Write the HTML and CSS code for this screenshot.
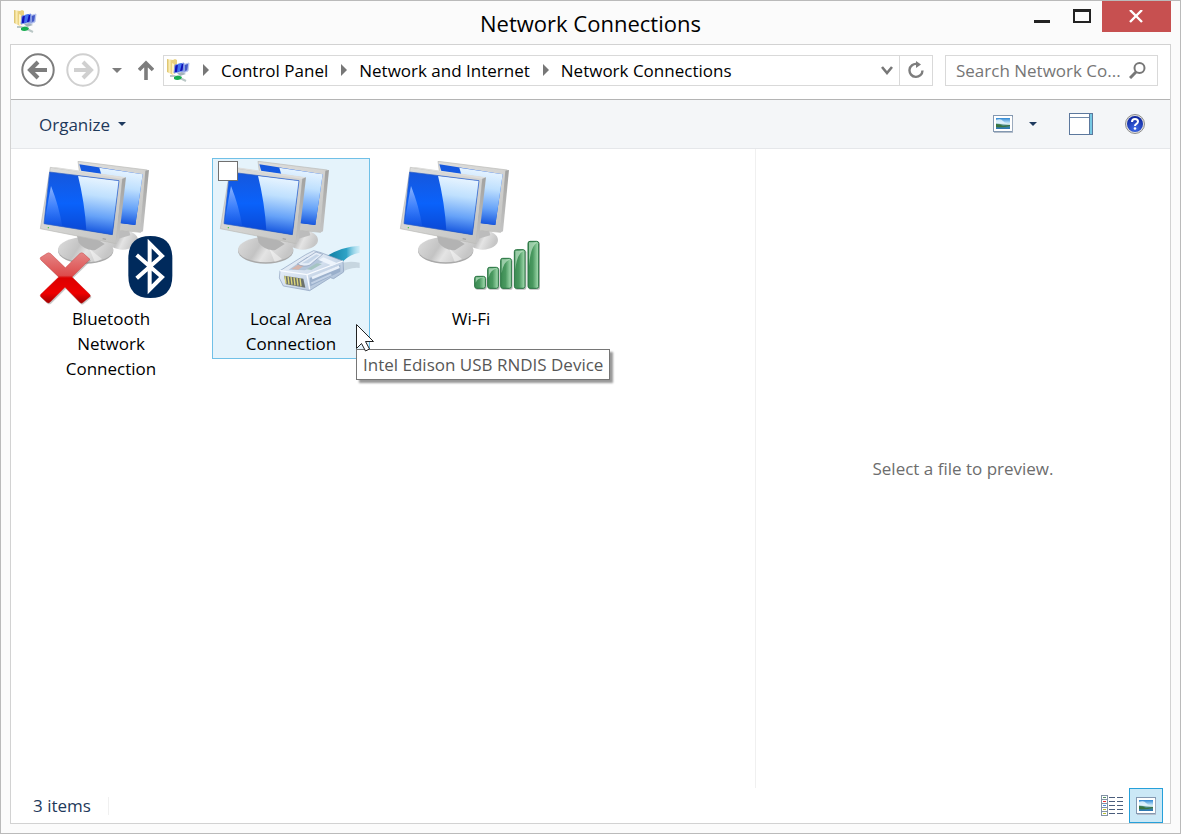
FILE: index.html
```
<!DOCTYPE html>
<html lang="en">
<head>
<meta charset="utf-8">
<title>Network Connections</title>
<link rel="stylesheet" href="styles.css">
</head>
<body>
<svg class="defs" aria-hidden="true">
  <defs>
    <linearGradient id="frame" x1="0" y1="0" x2="1" y2="1"><stop offset="0" stop-color="#dededc"/><stop offset=".5" stop-color="#d4d4d2"/><stop offset="1" stop-color="#c2c2c0"/></linearGradient>
    <linearGradient id="side" x1="0" y1="0" x2="0" y2="1"><stop offset="0" stop-color="#a2a2a0"/><stop offset="1" stop-color="#c4c4c4"/></linearGradient>
    <linearGradient id="screen" x1="0" y1="0" x2="0" y2="1"><stop offset="0" stop-color="#1657dc"/><stop offset=".5" stop-color="#0a62fb"/><stop offset="1" stop-color="#0a45d0"/></linearGradient>
    <linearGradient id="glare" x1=".6" y1="0" x2=".5" y2="1"><stop offset="0" stop-color="#edf7ff"/><stop offset=".35" stop-color="#bfe0fe"/><stop offset=".7" stop-color="#66a2f8"/><stop offset="1" stop-color="#0f50dc"/></linearGradient>
    <linearGradient id="glint" x1="0" y1="0" x2="0" y2="1"><stop offset="0" stop-color="#8db6ff"/><stop offset="1" stop-color="#4a86ff" stop-opacity=".1"/></linearGradient>
    <linearGradient id="base" x1="0" y1="0" x2="1" y2=".3"><stop offset="0" stop-color="#dedede"/><stop offset=".45" stop-color="#c3c3c3"/><stop offset=".62" stop-color="#e4e4e4"/><stop offset="1" stop-color="#c6c6c6"/></linearGradient>
    <linearGradient id="red" x1="0" y1="0" x2="0" y2="1"><stop offset="0" stop-color="#e58585"/><stop offset=".45" stop-color="#dd4c4c"/><stop offset=".5" stop-color="#dc0000"/><stop offset=".8" stop-color="#ee0000"/><stop offset="1" stop-color="#a00000"/></linearGradient>
    <linearGradient id="bar" x1="0" y1="0" x2="1" y2="0"><stop offset="0" stop-color="#3b8a52"/><stop offset=".45" stop-color="#4a9960"/><stop offset="1" stop-color="#a9e0b5"/></linearGradient>
    <linearGradient id="cable" x1="0" y1="0" x2="1" y2="0"><stop offset="0" stop-color="#0c7ba0"/><stop offset=".6" stop-color="#2fa3c6"/><stop offset="1" stop-color="#9bdcf0" stop-opacity=".3"/></linearGradient>
    <linearGradient id="plug" x1="0" y1="0" x2="1" y2="1"><stop offset="0" stop-color="#f4f8fd"/><stop offset=".5" stop-color="#d3dfee"/><stop offset="1" stop-color="#97aeca"/></linearGradient>
    <linearGradient id="sky" x1="0" y1="0" x2="0" y2="1"><stop offset="0" stop-color="#2c86d2"/><stop offset=".45" stop-color="#c5e6fa"/><stop offset=".6" stop-color="#4f8f80"/><stop offset="1" stop-color="#2a76b8"/></linearGradient>
    <linearGradient id="folder" x1="0" y1="0" x2="1" y2="0"><stop offset="0" stop-color="#d8bd62"/><stop offset=".4" stop-color="#fbedb4"/><stop offset="1" stop-color="#e0c46c"/></linearGradient>
    <radialGradient id="help" cx=".5" cy=".8" r=".8"><stop offset="0" stop-color="#3f6ce8"/><stop offset="1" stop-color="#0b229a"/></radialGradient>
    <symbol id="monitors" viewBox="27 33 432 435">
      <ellipse cx="278" cy="270" rx="46" ry="29" fill="url(#base)"/>
      <path d="M240 238l58 6 3 12-56 16z" fill="#bcbcbc"/>
      <path d="M144 34l208 26-21 187-60-6-101-20z" fill="url(#frame)" stroke="#b9b9b7" stroke-width="2"/>
      <path d="M346 62l11-2-18 184-9 4z" fill="url(#side)"/>
      <path d="M148 43l190 30-22 152-120-14z" fill="url(#screen)"/>
      <path d="M208 53l130 20-22 152-60-8z" fill="url(#glare)"/>
      <ellipse cx="167" cy="303" rx="83" ry="38" fill="#a9a9a9"/>
      <ellipse cx="167" cy="299" rx="83" ry="38" fill="url(#base)"/>
      <path d="M140 254l62 14 22 14-28 18q-28 4-50-22z" fill="#b3b3b3"/>
      <path d="M178 296l38 31q-12 6-22 8z" fill="#fff" opacity=".45"/>
      <path d="M61 52l217 31-20 198L31 236z" fill="url(#frame)" stroke="#b9b9b7" stroke-width="2"/>
      <path d="M61 52l14-1 213 31-11 5z" fill="#dededc"/>
      <path d="M277 86l11-4-22 190-9 10z" fill="url(#side)"/>
      <path d="M59 66l208 26-20 162L42 221z" fill="url(#screen)"/>
      <path d="M144 77l123 15-20 162-78-13q-5-84-25-164z" fill="url(#glare)"/>
      <path d="M63 108q24 60 34 122l-55-9z" fill="url(#glint)"/>
      <path d="M59 66l208 26-20 162L42 221z" fill="none" stroke="#2a5dc4" stroke-width="2"/>
      <circle cx="55" cy="233" r="2" fill="#35c435"/>
      <path d="M218 266l10 2" stroke="#a2a2a2" stroke-width="4"/>
    </symbol>
    <symbol id="network" viewBox="0 0 24 24">
      <path d="M1 1l6 1v15l-6-3z" fill="url(#folder)"/>
      <path d="M5 3l4-2 2 1v12l-5 3z" fill="#e9d07c"/>
      <path d="M6 5l2 1v10l-2 1z" fill="#fff2bf"/>
      <path d="M16 7l7-2-1 8-5 2z" fill="#8d9dde" stroke="#b9c7ee"/>
      <path d="M19 7l3-1-1 6-2 1z" fill="#4258c8"/>
      <path d="M9 7l9-2-1 8-9 2z" fill="#1010b8" stroke="#7d9bec"/>
      <path d="M12 6l4-1-2 8-3 1z" fill="#4372f0"/>
      <path d="M11 15l5-1 4 2-6 2z" fill="#a4b2bd"/>
      <path d="M4 18h4l6 2 6 3" fill="none" stroke="#bac7c6" stroke-width="2"/>
      <path d="M8 19q4-3 8 0l-1 2q-4 2-7 0z" fill="#18ad50"/>
    </symbol>
    <symbol id="picture" viewBox="0 0 20 18">
      <rect x=".5" y=".5" width="19" height="16" fill="#fff" stroke="#8398b1"/>
      <path d="M1 17.500h19V2" fill="none" stroke="#b4becb"/>
      <rect x="3" y="3" width="14" height="11" fill="url(#sky)"/>
      <path d="M3 5q5-2 7 1t7 2v2q-7 0-14-2z" fill="#e8f6ff" opacity=".8"/>
      <path d="M3 9q4 0 7 2l7-1v1q-8 2-14 1z" fill="#39743f"/>
    </symbol>
  </defs>
</svg>

<div class="window">
  <header class="titlebar">
    <svg class="app-icon" viewBox="0 0 24 24" aria-hidden="true"><use href="#network"/></svg>
    <h1 class="title">Network Connections</h1>
    <div class="window-buttons">
      <button class="window-button minimize" aria-label="Minimize"><svg width="16" height="15" viewBox="0 0 16 15"><path d="M0 11h16v3H0z" fill="#222"/></svg></button>
      <button class="window-button maximize" aria-label="Maximize"><svg width="18" height="15" viewBox="0 0 18 15"><path d="M0 0h18v14H0zM2 3v9h14V3z" fill="#222" fill-rule="evenodd"/></svg></button>
      <button class="window-button close" aria-label="Close"><svg width="15" height="13" viewBox="0 0 15 13"><path d="M1 0l12 12M13 0L1 12" stroke="#fff" stroke-width="2.4"/></svg></button>
    </div>
  </header>

  <div class="client">
    <nav class="navbar">
      <button class="back" aria-label="Back"><svg width="34" height="34" viewBox="0 0 34 34"><circle cx="17" cy="17" r="15.700" fill="none" stroke="#7d7d7d" stroke-width="2"/><path d="M26 17H11M17 9l-8 8 8 8" fill="none" stroke="#7d7d7d" stroke-width="4"/></svg></button>
      <button class="forward" aria-label="Forward" disabled><svg width="34" height="34" viewBox="0 0 34 34"><circle cx="17" cy="17" r="15.700" fill="none" stroke="#d0d0d0" stroke-width="2"/><path d="M8 17h15M17 9l8 8-8 8" fill="none" stroke="#d0d0d0" stroke-width="4"/></svg></button>
      <button class="recent" aria-label="Recent locations"><svg width="10" height="5" viewBox="0 0 10 5"><path d="M0 0h10L5 5z" fill="#7d7d7d"/></svg></button>
      <button class="up" aria-label="Up"><svg width="16" height="20" viewBox="0 0 16 20"><path d="M8 20V3M1 10l7-7 7 7" fill="none" stroke="#7d7d7d" stroke-width="3.600"/></svg></button>
      <div class="address">
        <svg class="address-icon" viewBox="0 0 24 24" aria-hidden="true"><use href="#network"/></svg>
        <svg class="chevron" viewBox="0 0 6 12"><path d="M0 0l6 6-6 6z"/></svg>
        <a class="crumb" href="#">Control Panel</a>
        <svg class="chevron" viewBox="0 0 6 12"><path d="M0 0l6 6-6 6z"/></svg>
        <a class="crumb" href="#">Network and Internet</a>
        <svg class="chevron" viewBox="0 0 6 12"><path d="M0 0l6 6-6 6z"/></svg>
        <a class="crumb" href="#">Network Connections</a>
        <button class="history" aria-label="Previous locations"><svg width="12" height="9" viewBox="0 0 12 9"><path d="M1 1l5 6 5-6" fill="none" stroke="#777" stroke-width="2.600"/></svg></button>
        <button class="refresh" aria-label="Refresh"><svg width="16" height="18" viewBox="0 0 16 18"><path d="M9 3A6.500 6.500 0 1 0 14.500 9.500" fill="none" stroke="#7d7d7d" stroke-width="2.400"/><path d="M8 0v7l5-3.500z" fill="#7d7d7d"/></svg></button>
      </div>
      <div class="search">
        <input class="search-input" type="text" aria-label="Search Network Connections" placeholder="Search Network Co...">
        <svg width="17" height="17" viewBox="0 0 17 17" aria-hidden="true"><circle cx="10.500" cy="6" r="5" fill="none" stroke="#777" stroke-width="2"/><path d="M7 10l-6 6" stroke="#777" stroke-width="3"/></svg>
      </div>
    </nav>

    <div class="commands">
      <button class="organize">Organize <svg width="8" height="4" viewBox="0 0 8 4"><path d="M0 0h8L4 4z" fill="#1e3a5f"/></svg></button>
      <div class="view-tools">
        <button aria-label="Change view"><svg width="20" height="18"><use href="#picture"/></svg></button>
        <button class="view-more" aria-label="More options"><svg width="8" height="4" viewBox="0 0 8 4"><path d="M0 0h8L4 4z" fill="#1e3a5f"/></svg></button>
        <button class="pane-toggle" aria-label="Preview pane"><svg width="24" height="22" viewBox="0 0 24 22"><rect x=".5" y=".5" width="23" height="21" fill="#fff" stroke="#5c789d"/><path d="M1 4.500h20" stroke="#6f89aa"/><path d="M20.500 1v20" stroke="#5c789d"/><path d="M22 1v20" stroke="#77c9e4" stroke-width="2"/></svg></button>
        <button aria-label="Help"><svg width="20" height="20" viewBox="0 0 20 20"><circle cx="10" cy="10" r="9.500" fill="#e0e0e0" stroke="#8d8d8d"/><circle cx="10" cy="10" r="8" fill="url(#help)"/><path d="M7 8q0-3 3-3t3 2.500q0 1.500-1.500 2.300T10 12" fill="none" stroke="#fff" stroke-width="2"/><circle cx="10" cy="14.500" r="1.300" fill="#fff"/></svg></button>
      </div>
    </div>

    <div class="content">
      <main class="items">
        <div class="item">
          <svg class="item-icon" viewBox="27 33 432 435" aria-hidden="true">
            <use href="#monitors" x="27" y="33" width="432" height="435"/>
            <path d="M51 310q5-4 10 0l45 43 44-43q6-4 10 0l20 18-54 53 53 52q4 5 0 8l-22 18q-4 2-8-2l-44-45-45 45q-5 4-10 0l-18-17q-3-4 1-8l53-51-54-52q-3-4 0-7z" transform="translate(3 4)" fill="#777" opacity=".4"/>
            <path d="M51 310q5-4 10 0l45 43 44-43q6-4 10 0l20 18-54 53 53 52q4 5 0 8l-22 18q-4 2-8-2l-44-45-45 45q-5 4-10 0l-18-17q-3-4 1-8l53-51-54-52q-3-4 0-7z" fill="url(#red)" stroke="#c02020"/>
            <path d="M295 325q0-67 66-67t66 67v52q0 67-66 67t-66-67z" fill="#002a5c"/>
            <path d="M320 315l76 66-37 37V281l37 37-76 67" fill="none" stroke="#fff" stroke-width="12"/>
          </svg>
          <span class="item-label">Bluetooth Network Connection</span>
        </div>

        <div class="item selected">
          <svg class="item-icon" viewBox="27 33 432 435" aria-hidden="true">
            <use href="#monitors" x="27" y="33" width="432" height="435"/>
            <path d="M382 343q30-12 67-5v16q-30-4-67 20z" fill="#9aabb8" opacity=".4"/>
            <path d="M350 318q45-28 99-31v21q-34 5-59 36z" fill="url(#cable)"/>
            <path d="M210 362l77-48 24-12 22 6 66 25 2 33-30 20-10-3-62 39-79-14-12-24z" fill="url(#plug)" stroke="#8b9fbd" stroke-width="2"/>
            <path d="M210 362l81 12 108-41M291 374l8 44" fill="none" stroke="#f8fbff" stroke-width="4"/>
            <path d="M299 384l92-39v20l-90 44z" fill="#8fa5c4" opacity=".75"/>
            <path d="M306 384l82-34" stroke="#e9f0f9" stroke-width="8"/>
            <path d="M304 400l60-27" stroke="#c2d1e5" stroke-width="6"/>
            <path d="M222 377l58 9 6 27-58-10z" fill="#6b716c"/>
            <path d="M225 378l3 23m6-22l3 24m6-22l3 23m6-22l3 24m6-22l3 23m6-22l3 24" stroke="#ddd77a" stroke-width="4"/>
            <path d="M236 359l55-38 54 12-60 28z" fill="#b3c5da"/>
            <path d="M244 357l34-22 16 3-29 21z" fill="#d6b5ac"/>
            <path d="M290 358l30-18 16 2-32 18z" fill="#a5c4c2"/>
            <path d="M262 342l56-36 20 7-38 32q-18 8-38-3z" fill="#e6eef8" stroke="#8b9fbd" stroke-width="2"/>
            <path d="M276 340l43-27 9 3-33 24z" fill="#c5d5e8"/>
            <path d="M340 322l42 18-15 7-41-17z" fill="#edf4fc"/>
          </svg>
          <label class="item-label" for="select-lan">Local Area Connection</label>
          <input class="item-check" id="select-lan" type="checkbox">
          <svg class="cursor" viewBox="0 0 18 28" aria-hidden="true"><path d="M.5 .5v24l5-5 4 7.500 4-2-4-7.500h8z" fill="#fff" stroke="#222"/></svg>
          <div class="tooltip" role="tooltip">Intel Edison USB RNDIS Device</div>
        </div>

        <div class="item">
          <svg class="item-icon" viewBox="27 33 432 435" aria-hidden="true">
            <use href="#monitors" x="27" y="33" width="432" height="435"/>
            <g transform="translate(3 3)" fill="#777" opacity=".5"><rect x="253" y="378" width="34" height="38" rx="6"/><rect x="292" y="351" width="34" height="65" rx="6"/><rect x="331" y="324" width="34" height="92" rx="6"/><rect x="372" y="298" width="34" height="118" rx="6"/><rect x="413" y="273" width="34" height="143" rx="6"/></g>
            <g fill="url(#bar)" stroke="#267340" stroke-width="3"><rect x="254" y="379" width="32" height="36" rx="6"/><rect x="293" y="352" width="32" height="63" rx="6"/><rect x="332" y="325" width="32" height="90" rx="6"/><rect x="373" y="299" width="32" height="116" rx="6"/><rect x="414" y="274" width="32" height="141" rx="6"/></g>
            <g fill="#d4f2da" opacity=".6"><path d="M257 382h25q-20 3-25 16zM296 355h25q-21 5-25 28zM335 328h25q-21 8-25 42zM376 302h25q-21 10-25 58zM417 277h25q-21 12-25 72z"/></g>
          </svg>
          <span class="item-label">Wi-Fi</span>
        </div>
      </main>
      <aside class="preview">Select a file to preview.</aside>
    </div>

    <footer class="statusbar">
      <span class="count">3 items</span>
      <button class="view-button" aria-label="Details view"><svg width="22" height="21" viewBox="0 0 22 21"><path d="M0 0h7v21H0z" fill="#8292a5"/><path d="M1 1h5v3H1zM1 5h5v3H1zM1 9h5v3H1zM1 13h5v3H1zM1 17h5v3H1z" fill="#fff"/><path d="M2 2.500h3" stroke="#55905f"/><path d="M2 6.500h3" stroke="#e33"/><path d="M2 10.500h3" stroke="#4a8fe0"/><path d="M2 14.500h3M2 18.500h3" stroke="#b9bf32"/><path d="M8 2.500h6m2 0h6M8 6.500h6m2 0h6M8 10.500h6m2 0h6M8 14.500h6m2 0h6M8 18.500h6m2 0h6" stroke="#4a5d7c"/></svg></button>
      <button class="view-button active" aria-label="Large icons view" aria-pressed="true"><svg width="20" height="18"><use href="#picture"/></svg></button>
    </footer>
  </div>
</div>
</body>
</html>
```

FILE: styles.css
```
* {
  box-sizing: border-box;
}

body {
  margin: 0;
  font-family: "Open Sans", "Noto Sans", sans-serif;
  font-size: 17px;
  line-height: 25px;
  color: #000;
}

button {
  display: flex;
  align-items: center;
  justify-content: center;
  padding: 0;
  border: 0;
  background: none;
  font: inherit;
  color: inherit;
}

svg {
  display: block;
  flex: none;
}

.defs {
  position: absolute;
  width: 0;
  height: 0;
}

.window {
  display: flex;
  flex-direction: column;
  min-height: 100vh;
  padding: 0 9px 9px;
  border: 1px solid #bababa;
  background: #fbfbfb;
}

/* Title bar */
.titlebar {
  display: grid;
  grid-template-columns: 1fr auto 1fr;
  height: 43px;
}

.app-icon {
  width: 24px;
  height: 24px;
  margin: 8px 0 0 3px;
}

.title {
  margin: 6px 0 0;
  font-size: 22px;
  font-weight: 400;
  line-height: 32px;
}

.window-buttons {
  display: flex;
  justify-content: flex-end;
  height: 31px;
}

.window-button {
  width: 40px;
}

.close {
  width: 69px;
  background: #c75050;
}

/* Client area */
.client {
  display: flex;
  flex: 1;
  flex-direction: column;
  border: 1px solid #d2d2d2;
  background: #fff;
}

.navbar {
  display: flex;
  align-items: center;
  height: 55px;
  padding: 0 12px 4px 10px;
  border-bottom: 1px solid #b4b4b4;
}

.forward {
  margin-left: 11px;
}

.recent {
  width: 33px;
  height: 31px;
}

.up {
  width: 26px;
  margin-right: 4px;
}

.address {
  display: flex;
  flex: 1;
  align-items: center;
  height: 31px;
  margin-right: 12px;
  padding-left: 2px;
  border: 1px solid #d9d9d9;
}

.address-icon {
  width: 24px;
  height: 24px;
}

.chevron {
  width: 6px;
  height: 12px;
  margin: 0 12px 0 13px;
  fill: #777;
}

.crumb {
  color: #000;
  text-decoration: none;
  white-space: nowrap;
}

.history {
  width: 24px;
  height: 29px;
  margin-left: auto;
}

.refresh {
  width: 33px;
  height: 29px;
  border-left: 1px solid #d9d9d9;
}

.search {
  display: flex;
  align-items: center;
  width: 213px;
  height: 31px;
  padding: 0 11px 0 10px;
  border: 1px solid #d9d9d9;
}

.search-input {
  flex: 1;
  min-width: 0;
  padding: 0;
  border: 0;
  outline: 0;
  background: none;
  font: inherit;
}

.search-input::placeholder {
  color: #767676;
  opacity: 1;
}

/* Command bar */
.commands {
  display: flex;
  align-items: center;
  justify-content: space-between;
  height: 49px;
  padding: 0 25px 0 28px;
  border-bottom: 1px solid #e5e7ea;
  background: #f4f6f8;
  color: #1e395b;
}

.organize {
  gap: 8px;
}

.view-tools {
  display: flex;
  align-items: center;
}

.view-more {
  width: 16px;
  height: 24px;
  margin-left: 12px;
}

.pane-toggle {
  margin: 0 32px 0 28px;
}

/* Items and preview */
.content {
  display: flex;
  flex: 1;
}

.items {
  display: flex;
  flex: 1;
  align-items: flex-start;
  gap: 22px;
  padding: 9px 21px;
}

.item {
  position: relative;
  display: flex;
  flex-direction: column;
  align-items: center;
  width: 158px;
  padding: 2px 20px;
  border: 1px solid transparent;
  text-align: center;
}

.item.selected {
  border-color: #70c0e7;
  background: #e5f3fb;
}

.item-icon {
  width: 144px;
  height: 145px;
}

.item-check {
  position: absolute;
  top: 2px;
  left: 5px;
  width: 20px;
  height: 20px;
  margin: 0;
  border: 1px solid #707070;
  background: #fff;
  appearance: none;
}

.cursor {
  position: absolute;
  z-index: 1;
  top: 165px;
  left: 143px;
  width: 18px;
  height: 28px;
}

.tooltip {
  position: absolute;
  top: 190px;
  left: 143px;
  padding: 2px 6px;
  border: 1px solid #767676;
  background: #fff;
  box-shadow: 3px 3px 2px #999;
  color: #575757;
  white-space: nowrap;
}

.preview {
  display: flex;
  align-items: center;
  justify-content: center;
  width: 415px;
  border-left: 1px solid #f0f0f0;
  color: #6d6d6d;
}

/* Status bar */
.statusbar {
  display: flex;
  align-items: center;
  height: 35px;
  padding: 0 7px 0 22px;
  color: #1e395b;
}

.count {
  margin-right: auto;
  padding-right: 17px;
  border-right: 1px solid #f0f0f0;
  line-height: 18px;
}

.view-button {
  width: 34px;
  height: 35px;
}

.view-button.active {
  border: 1px solid #26a0da;
  background: #cbe8f6;
}
```
